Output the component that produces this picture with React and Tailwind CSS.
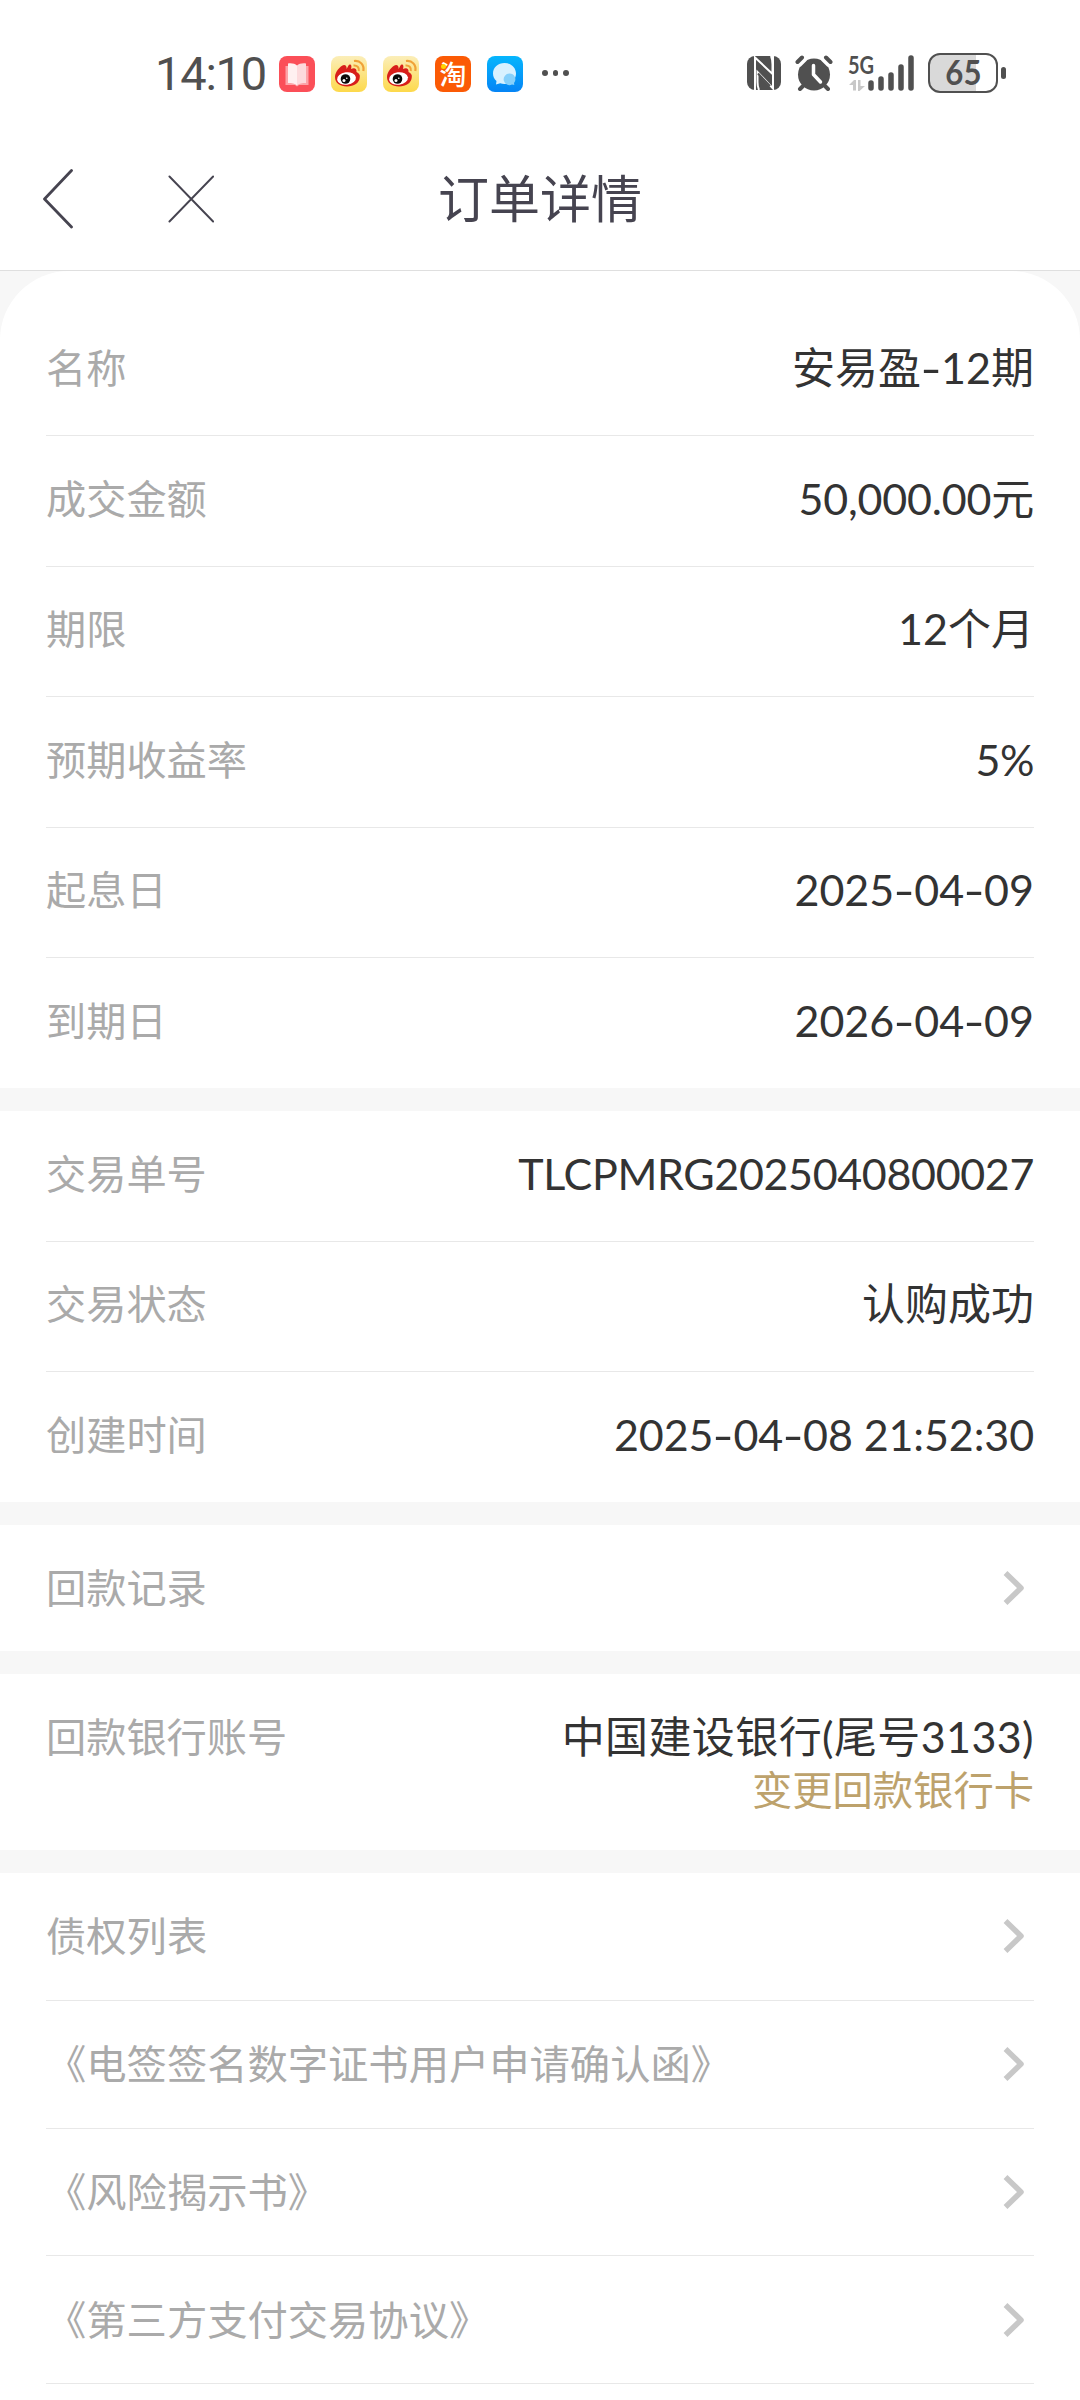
import React from "react";

const orderRows = [
  { label: "名称", value: "安易盈-12期" },
  { label: "成交金额", value: "50,000.00元", tracking: "tracking-[-0.2px]" },
  { label: "期限", value: "12个月" },
  { label: "预期收益率", value: "5%", tracking: "tracking-[-0.5px]" },
  { label: "起息日", value: "2025-04-09" },
  { label: "到期日", value: "2026-04-09" },
];

const tradeRows = [
  { label: "交易单号", value: "TLCPMRG2025040800027", tracking: "tracking-[-0.35px]" },
  { label: "交易状态", value: "认购成功" },
  { label: "创建时间", value: "2025-04-08 21:52:30", tracking: "tracking-[-0.1px]" },
];

const links = [
  "债权列表",
  "《电签签名数字证书用户申请确认函》",
  "《风险揭示书》",
  "《第三方支付交易协议》",
];

function WeiboIcon() {
  return (
    <svg width="36" height="36" viewBox="0 0 36 36">
      <defs>
        <linearGradient id="weibo" x1="0" y1="0" x2="0" y2="1">
          <stop offset="0" stopColor="#fbeeb9" />
          <stop offset="1" stopColor="#fdd94b" />
        </linearGradient>
      </defs>
      <rect width="36" height="36" rx="8" fill="url(#weibo)" />
      <path
        d="M4 21c0-5 5-11 9-12 2 0 3 2 2.500 4 2-3 2-5 4-4.500 1.500 1 .8 3.500 .5 4.500 3-1.500 6-1 5.500 3 2.500 1 3.800 3 3.300 5C28.500 27 23 30.500 16 30.500S4 27 4 21z"
        fill="#d81e1a"
      />
      <ellipse cx="15.500" cy="22.500" rx="9.500" ry="6.200" fill="#fff" transform="rotate(-8 15.500 22.500)" />
      <circle cx="14.500" cy="23" r="4.800" fill="#0a0a0a" />
      <circle cx="13" cy="24.500" r="1.500" fill="#fff" />
      <circle cx="15.800" cy="22.300" r=".8" fill="#fff" />
      <path d="M22.500 9.500c3.500-.5 6 2 5.300 5.500" fill="none" stroke="#f0a238" strokeWidth="2" />
      <path d="M23 5c6-1 10.500 4 9.300 10" fill="none" stroke="#f0a238" strokeWidth="2.200" />
    </svg>
  );
}

function BookIcon() {
  return (
    <svg width="36" height="36" viewBox="0 0 36 36">
      <rect width="36" height="36" rx="8" fill="#fb4f58" />
      <path d="M6.500 10h23v19h-9.500l-2 1.500-2-1.500H6.500z" fill="#fda3a7" />
      <path d="M9 7.500c4-.5 7 .3 9 2v20c-2-2-5-2.500-9-2.500z" fill="#fff0f0" />
      <path d="M27 7.500c-4-.5-7 .3-9 2v20c2-2 5-2.500 9-2.500z" fill="#fddadc" />
    </svg>
  );
}

function TaobaoIcon() {
  return (
    <div className="relative flex h-9 w-9 items-center justify-center rounded-lg bg-[#fb5a05]">
      <span className="text-[27px] leading-none font-medium text-white">淘</span>
      <span className="absolute top-2 left-1.5 h-[5px] w-[5px] rounded-full bg-[#ffd400]" />
    </div>
  );
}

function MessageIcon() {
  return (
    <svg width="36" height="36" viewBox="0 0 36 36">
      <defs>
        <linearGradient id="msg" x1="0" y1="0" x2="0" y2="1">
          <stop offset="0" stopColor="#06b6fd" />
          <stop offset="1" stopColor="#0584f5" />
        </linearGradient>
      </defs>
      <rect width="36" height="36" rx="8" fill="url(#msg)" />
      <path
        d="M17.500 7c6.500 0 11.500 4.600 11.500 10.500S24 28 17.500 28c-1.500 0-3-.3-4.300-.7L9 28.500l.5-3.500C7.300 23 6 20.500 6 17.500 6 11.600 11 7 17.500 7z"
        fill="#d8f1ff"
      />
      <path d="M22.500 17.500a5.800 5.800 0 0 1 4.500 9.500l.3 2-2.300-.5a5.800 5.800 0 1 1-2.500-11z" fill="#86d0fb" />
    </svg>
  );
}

function NfcIcon() {
  return (
    <svg width="34" height="34" viewBox="0 0 34 34">
      <rect width="34" height="34" rx="8" fill="#505050" />
      <path
        d="M8 34V1.500L25.500 18V8.500C25.500 5 25 2.500 24 0M26 0v32.500L10.500 16v10c0 3.500 .5 6 1.500 8"
        fill="none"
        stroke="#fff"
        strokeWidth="2"
      />
      <path d="M11 17.500L23 30" stroke="#505050" strokeWidth="2" />
    </svg>
  );
}

function AlarmIcon() {
  return (
    <svg width="38" height="36" viewBox="0 0 38 36" fill="none" strokeLinecap="round">
      <circle cx="19" cy="19.500" r="16" fill="#505050" />
      {/* keeps the bells apart from the clock face */}
      <path d="M5 10.500L10.500 5M33 10.500L27.500 5" stroke="#fff" strokeWidth="2.500" />
      <path d="M2.500 7L7 2.500M35.500 7L31 2.500M8 31l-3 3M30 31l3 3" stroke="#505050" strokeWidth="4" />
      <path d="M18.500 10.500v9l7 7.500" stroke="#fff" strokeWidth="3.500" strokeLinejoin="round" />
    </svg>
  );
}

function SignalIcon() {
  return (
    <div className="relative h-9 w-[66px]">
      <svg width="66" height="36" viewBox="0 0 66 36" strokeLinecap="round">
        <path
          d="M22 28v5M32 24v9M42 20v13M52 12v21M62 3v30"
          stroke="#505050"
          strokeWidth="5.500"
        />
        <path d="M0 30l5-5h2v10.500H4V30zM9 25h2.500v6H16l-5.500 5H9z" fill="#c8c8c8" />
      </svg>
      <span className="absolute -top-[3px] -left-px origin-left scale-x-[0.8] font-[Lato] text-[25px] leading-6 font-bold">
        5G
      </span>
    </div>
  );
}

function Battery() {
  return (
    <div className="flex items-center gap-[3px]">
      <div className="flex h-10 w-[70px] items-center justify-center rounded-xl border-[2.5px] border-[#505050] bg-linear-to-r from-[#d9d9d9] from-70% to-white to-70%">
        <span className="scale-x-[0.93] font-[Lato] text-[33.5px] leading-none font-bold">65</span>
      </div>
      <div className="h-3 w-[5px] rounded-full bg-[#505050]" />
    </div>
  );
}

function StatusBar() {
  return (
    <div className="flex h-[147px] items-start justify-between pt-[53px] pr-[74px] pl-[155px] text-[#505050]">
      <div className="flex h-10 items-center">
        <span className="w-[124px] pt-0.5 font-[Roboto] text-[47px] leading-10 tracking-[-1.2px]">14:10</span>
        <div className="flex items-center gap-4 pt-0.5">
          <BookIcon />
          <WeiboIcon />
          <WeiboIcon />
          <TaobaoIcon />
          <MessageIcon />
        </div>
        <div className="ml-[19px] flex gap-[5px]">
          <span className="h-[5.5px] w-[5.5px] rounded-full bg-[#505050]" />
          <span className="h-[5.5px] w-[5.5px] rounded-full bg-[#505050]" />
          <span className="h-[5.5px] w-[5.5px] rounded-full bg-[#505050]" />
        </div>
      </div>
      <div className="flex h-10 items-center">
        <NfcIcon />
        <div className="ml-3.5">
          <AlarmIcon />
        </div>
        <div className="ml-4">
          <SignalIcon />
        </div>
        <div className="ml-[13px]">
          <Battery />
        </div>
      </div>
    </div>
  );
}

function Header() {
  return (
    <header className="grid h-[124px] grid-cols-[1fr_auto_1fr] items-start border-b border-[#dfdfdf] text-[#464450]">
      <div className="flex items-center gap-[95px] pt-[21px] pl-[41px]">
        <svg width="32" height="62" viewBox="0 0 32 62" fill="none" stroke="currentColor" strokeWidth="2.800" strokeLinecap="round" strokeLinejoin="round">
          <path d="M30.500 2.500L3.500 31l27 28" />
        </svg>
        <svg width="46" height="48" viewBox="0 0 46 48" stroke="currentColor" strokeWidth="2" strokeLinecap="round">
          <path d="M1.500 1.500l45 45M46.500 1.500l-45 45" transform="scale(.97 1)" />
        </svg>
      </div>
      <h1 className="pt-[22px] text-[51px] leading-[60px]">订单详情</h1>
    </header>
  );
}

function ChevronRight() {
  return (
    <svg className="mr-[9px]" width="22" height="36" viewBox="0 0 22 36" fill="none" stroke="#c8c8c8" strokeWidth="5.500" strokeLinejoin="round">
      <path d="M2.500 3L18 18 2.500 33" />
    </svg>
  );
}

// hyphens are set wider than the font's own
function Value({ text }) {
  return text.split(/(-)/).map((part, index) =>
    part === "-" ? (
      <span key={index} className="inline-block w-5 scale-x-[1.35] text-center">
        -
      </span>
    ) : (
      part
    )
  );
}

function InfoRow({ label, value, tracking = "" }) {
  return (
    <div className="flex h-[130.5px] items-center justify-between border-b border-[#e8e8e8] pb-1 last:h-[130px] last:border-b-0">
      <span className="text-[40.2px] leading-[60px] text-[#aaaaaa]">{label}</span>
      <span className={`text-[43px] leading-[60px] text-[#333333] ${tracking}`}>
        <Value text={value} />
      </span>
    </div>
  );
}

export default function App() {
  return (
    <div className="h-[2400px] w-[1080px] overflow-hidden bg-[#f7f7f7] font-[Lato,'Noto_Sans_CJK_SC',sans-serif]">
      <div className="bg-white">
        <StatusBar />
        <Header />
      </div>

      <main className="flex flex-col gap-[23px]">
        <section className="rounded-t-[69px] bg-white px-[46px] pt-[34.5px]">
          {orderRows.map((row) => (
            <InfoRow key={row.label} {...row} />
          ))}
        </section>

        <section className="bg-white px-[46px]">
          {tradeRows.map((row) => (
            <InfoRow key={row.label} {...row} />
          ))}
        </section>

        <section className="flex h-[126px] items-center justify-between bg-white px-[46px]">
          <span className="text-[40.2px] leading-[60px] text-[#aaaaaa]">回款记录</span>
          <ChevronRight />
        </section>

        <section className="flex h-44 items-start justify-between bg-white px-[46px] pt-9">
          <span className="text-[40.2px] leading-[53px] text-[#aaaaaa]">回款银行账号</span>
          <div className="flex flex-col items-end">
            <span className="text-[43px] leading-[53px] tracking-[0.4px] text-[#333333]">中国建设银行(尾号3133)</span>
            <span className="text-[40.3px] leading-[53px] text-[#bda26c]">变更回款银行卡</span>
          </div>
        </section>

        <section className="bg-white px-[46px]">
          {links.map((name) => (
            <div key={name} className="flex h-[127.75px] items-center justify-between border-b border-[#e8e8e8]">
              <span className="text-[40.3px] leading-[60px] text-[#aaaaaa]">{name}</span>
              <ChevronRight />
            </div>
          ))}
          <div className="h-4" />
        </section>
      </main>
    </div>
  );
}
